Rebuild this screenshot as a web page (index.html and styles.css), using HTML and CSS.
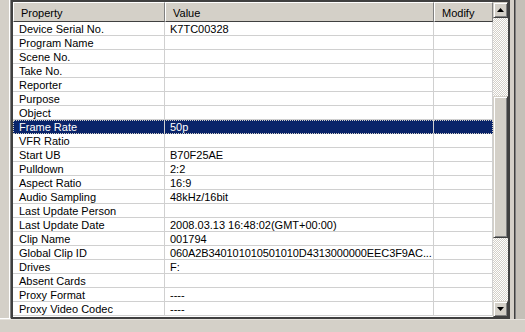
FILE: index.html
```html
<!DOCTYPE html>
<html lang="en">
<head>
<meta charset="UTF-8" />
<title>Clip Properties</title>
<link rel="stylesheet" href="styles.css">
</head>
<body>

<div class="window">
  <div class="side-left"></div>

  <!-- список свойств -->
  <div class="listview">
    <div class="grid-area">
      <div class="header">
        <div class="hcell">Property</div>
        <div class="hcell">Value</div>
        <div class="hcell">Modify</div>
      </div>
      <div class="rows">
        <div class="row"><div class="cell">Device Serial No.</div><div class="cell">K7TC00328</div><div class="cell"></div></div>
        <div class="row"><div class="cell">Program Name</div><div class="cell"></div><div class="cell"></div></div>
        <div class="row"><div class="cell">Scene No.</div><div class="cell"></div><div class="cell"></div></div>
        <div class="row"><div class="cell">Take No.</div><div class="cell"></div><div class="cell"></div></div>
        <div class="row"><div class="cell">Reporter</div><div class="cell"></div><div class="cell"></div></div>
        <div class="row"><div class="cell">Purpose</div><div class="cell"></div><div class="cell"></div></div>
        <div class="row"><div class="cell">Object</div><div class="cell"></div><div class="cell"></div></div>
        <div class="row selected"><div class="cell">Frame Rate</div><div class="cell">50p</div><div class="cell"></div></div>
        <div class="row"><div class="cell">VFR Ratio</div><div class="cell"></div><div class="cell"></div></div>
        <div class="row"><div class="cell">Start UB</div><div class="cell">B70F25AE</div><div class="cell"></div></div>
        <div class="row"><div class="cell">Pulldown</div><div class="cell">2:2</div><div class="cell"></div></div>
        <div class="row"><div class="cell">Aspect Ratio</div><div class="cell">16:9</div><div class="cell"></div></div>
        <div class="row"><div class="cell">Audio Sampling</div><div class="cell">48kHz/16bit</div><div class="cell"></div></div>
        <div class="row"><div class="cell">Last Update Person</div><div class="cell"></div><div class="cell"></div></div>
        <div class="row"><div class="cell">Last Update Date</div><div class="cell">2008.03.13 16:48:02(GMT+00:00)</div><div class="cell"></div></div>
        <div class="row"><div class="cell">Clip Name</div><div class="cell">001794</div><div class="cell"></div></div>
        <div class="row"><div class="cell">Global Clip ID</div><div class="cell long">060A2B340101010501010D4313000000EEC3F9AC...</div><div class="cell"></div></div>
        <div class="row"><div class="cell">Drives</div><div class="cell">F:</div><div class="cell"></div></div>
        <div class="row"><div class="cell">Absent Cards</div><div class="cell"></div><div class="cell"></div></div>
        <div class="row"><div class="cell">Proxy Format</div><div class="cell">----</div><div class="cell"></div></div>
        <div class="row"><div class="cell">Proxy Video Codec</div><div class="cell">----</div><div class="cell"></div></div>
      </div>
    </div>

    <!-- полоса прокрутки -->
    <div class="scrollbar">
      <div class="sb-btn"><svg width="7" height="4" viewBox="0 0 7 4"><path d="M3.5 0 L7 4 L0 4 Z" fill="#000"/></svg></div>
      <div class="sb-track top"></div>
      <div class="sb-thumb"></div>
      <div class="sb-track bottom"></div>
      <div class="sb-btn"><svg width="7" height="4" viewBox="0 0 7 4"><path d="M0 0 L7 0 L3.5 4 Z" fill="#000"/></svg></div>
    </div>
  </div>

  <div class="side-right"></div>
</div>
<div class="footer"></div>

</body>
</html>
```

FILE: styles.css
```css
html, body {
  margin: 0;
  padding: 0;
  background-color: #d4d0c8;
  font-family: "Liberation Sans", Arial, sans-serif;
  font-size: 11px;
  color: #000;
  overflow: hidden;
}
.window {
  display: flex;
  height: 319px;
}
.side-left {
  width: 9px;
  border-right: 1px solid #fff;
  border-bottom: 1px solid #fff;
  height: 318px;
  margin-right: 1px;
}
.listview {
  display: flex;
  width: 495px;
  border: 2px solid #404040;
  box-shadow: -1px -1px 0 #808080;
  background: #fff;
}
.grid-area {
  width: 480px;
  display: flex;
  flex-direction: column;
}
.header {
  display: grid;
  grid-template-columns: 152px 269px 59px;
  height: 20px;
}
.hcell {
  background: #d4d0c8;
  border-top: 1px solid #fff;
  border-left: 1px solid #fff;
  border-right: 1px solid #808080;
  border-bottom: 1px solid #404040;
  padding: 4px 0 0 7px;
  box-sizing: border-box;
  line-height: 13px;
}
.row {
  display: grid;
  grid-template-columns: 152px 269px 59px;
  height: 14px;
}
.cell {
  border-right: 1px solid #d0d0d0;
  border-bottom: 1px solid #d0d0d0;
  box-sizing: border-box;
  padding: 1px 0 0 6px;
  line-height: 13px;
  white-space: nowrap;
  overflow: hidden;
}
.cell + .cell {
  padding-left: 5px;
}
.cell.long {
  letter-spacing: -0.1px;
}
.row.selected {
  outline: 1px dotted #d4d0c8;
  outline-offset: -1px;
}
.row.selected .cell {
  background: #0a246a;
  color: #fff;
  border-bottom-color: #0a246a;
}
.row.selected .cell:last-child {
  border-right-color: #0a246a;
}
.scrollbar {
  width: 15px;
  display: flex;
  flex-direction: column;
}
.sb-btn, .sb-thumb {
  background: #d4d0c8;
  border-top: 1px solid #d4d0c8;
  border-left: 1px solid #d4d0c8;
  border-right: 1px solid #404040;
  border-bottom: 1px solid #404040;
  box-shadow: inset 1px 1px 0 #fff, inset -1px -1px 0 #808080;
  box-sizing: border-box;
}
.sb-btn {
  height: 16px;
  display: flex;
  align-items: center;
  justify-content: center;
}
.sb-track {
  background: repeating-conic-gradient(#fff 0 25%, #d4d0c8 0 50%) 0 0 / 2px 2px;
}
.sb-track.top {
  height: 78px;
}
.sb-thumb {
  height: 142px;
}
.sb-track.bottom {
  flex: 1;
}
.side-right {
  flex: 1;
  margin-left: 4px;
  border-left: 1px solid #404040;
  box-shadow: inset 1px 0 0 #808080;
  background: #c4c0b8;
}
.footer {
  height: 13px;
  border-top: 1px solid #e6e3dd;
}
```
